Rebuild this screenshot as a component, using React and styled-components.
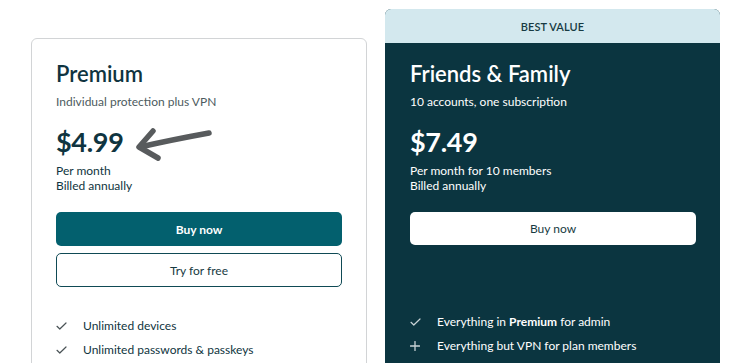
import React from "react";
import styled, { createGlobalStyle } from "styled-components";

const Global = createGlobalStyle`
  html, body { margin: 0; padding: 0; background: #ffffff; overflow: hidden; }
  body { font-family: "Lato", "Open Sans", sans-serif; -webkit-font-smoothing: antialiased; }
  * { box-sizing: border-box; }
`;

const Page = styled.div`
  display: flex;
  align-items: flex-start;
  gap: 18px;
  padding: 9px 0 0 31px;
  height: 363px;
  overflow: hidden;
`;

const Card = styled.div`
  position: relative;
  width: ${(p) => p.$w}px;
  margin-top: ${(p) => p.$offset}px;
  border-radius: 6px;
  display: flex;
  flex-direction: column;
  background: ${(p) => (p.$dark ? "#0b3540" : "#ffffff")};
  border: ${(p) => (p.$dark ? "none" : "1px solid #d2d4d6")};
  color: ${(p) => (p.$dark ? "#ffffff" : "#0f3440")};
  min-height: 360px;
`;

const Banner = styled.div`
  height: 34px;
  background: #d3e8ee;
  border-radius: 6px 6px 0 0;
  display: flex;
  align-items: center;
  justify-content: center;
  font-size: 11px;
  font-weight: 600;
  color: #173a42;
  letter-spacing: 0.1px;
`;

const Body = styled.div`
  display: flex;
  flex-direction: column;
  padding: ${(p) => p.$top}px 24px 0 ${(p) => p.$left}px;
`;

const Title = styled.h2`
  margin: 0;
  font-size: 22px;
  line-height: 28px;
  font-weight: 600;
`;

const Subtitle = styled.div`
  margin-top: 6px;
  font-size: 12px;
  line-height: 16px;
  color: ${(p) => (p.$dark ? "#ffffff" : "#4d5b60")};
`;

const Price = styled.div`
  margin-top: 16px;
  font-size: 27px;
  line-height: 32px;
  font-weight: 700;
  letter-spacing: -0.3px;
`;

const Note = styled.div`
  margin-top: 5px;
  font-size: 12px;
  line-height: 15px;
`;

const Button = styled.button`
  height: ${(p) => p.$h || 34}px;
  width: 100%;
  margin-top: ${(p) => p.$mt}px;
  border-radius: 5px;
  font-family: inherit;
  font-size: 12px;
  cursor: pointer;
  font-weight: ${(p) => (p.$variant === "primary" ? 700 : 400)};
  background: ${(p) =>
    p.$variant === "primary" ? "#03606e" : "#ffffff"};
  color: ${(p) => (p.$variant === "primary" ? "#ffffff" : "#173a42")};
  border: ${(p) =>
    p.$variant === "outline" ? "1px solid #0f4a55" : "none"};
`;

const Features = styled.ul`
  list-style: none;
  margin: ${(p) => p.$mt}px 0 0 0;
  padding: 0;
`;

const Feature = styled.li`
  display: flex;
  align-items: center;
  font-size: 12px;
  line-height: 24px;
  b { font-weight: 700; }
`;

const IconBox = styled.span`
  width: 27px;
  display: flex;
  align-items: center;
  color: ${(p) => (p.$dark ? "#c9d3d6" : "#4a5356")};
`;

const Arrow = styled.svg`
  position: absolute;
  left: 100px;
  top: 86px;
  overflow: visible;
`;

const Check = () => (
  <svg width="11" height="8" viewBox="0 0 11 8" fill="none">
    <path d="M1 4.3 L3.8 7 L10 1" stroke="currentColor" strokeWidth="1.2" strokeLinecap="round" strokeLinejoin="round" />
  </svg>
);

const Plus = () => (
  <svg width="10" height="10" viewBox="0 0 10 10" fill="none">
    <path d="M5 0.5 V9.5 M0.5 5 H9.5" stroke="currentColor" strokeWidth="1.3" strokeLinecap="round" />
  </svg>
);

export default function App() {
  return (
    <>
      <Global />
      <Page>
        <Card $w={336} $offset={29}>
          <Body $top={21} $left={24}>
            <Title>Premium</Title>
            <Subtitle>Individual protection plus VPN</Subtitle>
            <Price>$4.99</Price>
            <Note>
              Per month
              <br />
              Billed annually
            </Note>
            <Button $variant="primary" $mt={19}>Buy now</Button>
            <Button $variant="outline" $mt={7}>Try for free</Button>
            <Features $mt={27}>
              <Feature>
                <IconBox><Check /></IconBox>Unlimited devices
              </Feature>
              <Feature>
                <IconBox><Check /></IconBox>Unlimited passwords &amp; passkeys
              </Feature>
            </Features>
          </Body>
          <Arrow width="80" height="40" viewBox="0 0 80 40">
            <path
              d="M8 22 C 30 17, 55 12, 77 8"
              stroke="#585b5d"
              strokeWidth="5.5"
              fill="none"
              strokeLinecap="round"
            />
            <path
              d="M21 6 L7 22 L26 33"
              stroke="#585b5d"
              strokeWidth="5.5"
              fill="none"
              strokeLinecap="round"
              strokeLinejoin="round"
            />
          </Arrow>
        </Card>
        <Card $w={335} $offset={0} $dark>
          <Banner>BEST VALUE</Banner>
          <Body $top={17} $left={25}>
            <Title>Friends &amp; Family</Title>
            <Subtitle $dark>10 accounts, one subscription</Subtitle>
            <Price>$7.49</Price>
            <Note>
              Per month for 10 members
              <br />
              Billed annually
            </Note>
            <Button $variant="light" $mt={19} $h={33}>Buy now</Button>
            <Features $mt={65}>
              <Feature>
                <IconBox $dark><Check /></IconBox>Everything in&nbsp;<b>Premium</b>&nbsp;for admin
              </Feature>
              <Feature>
                <IconBox $dark><Plus /></IconBox>Everything but VPN for plan members
              </Feature>
            </Features>
          </Body>
        </Card>
      </Page>
    </>
  );
}
